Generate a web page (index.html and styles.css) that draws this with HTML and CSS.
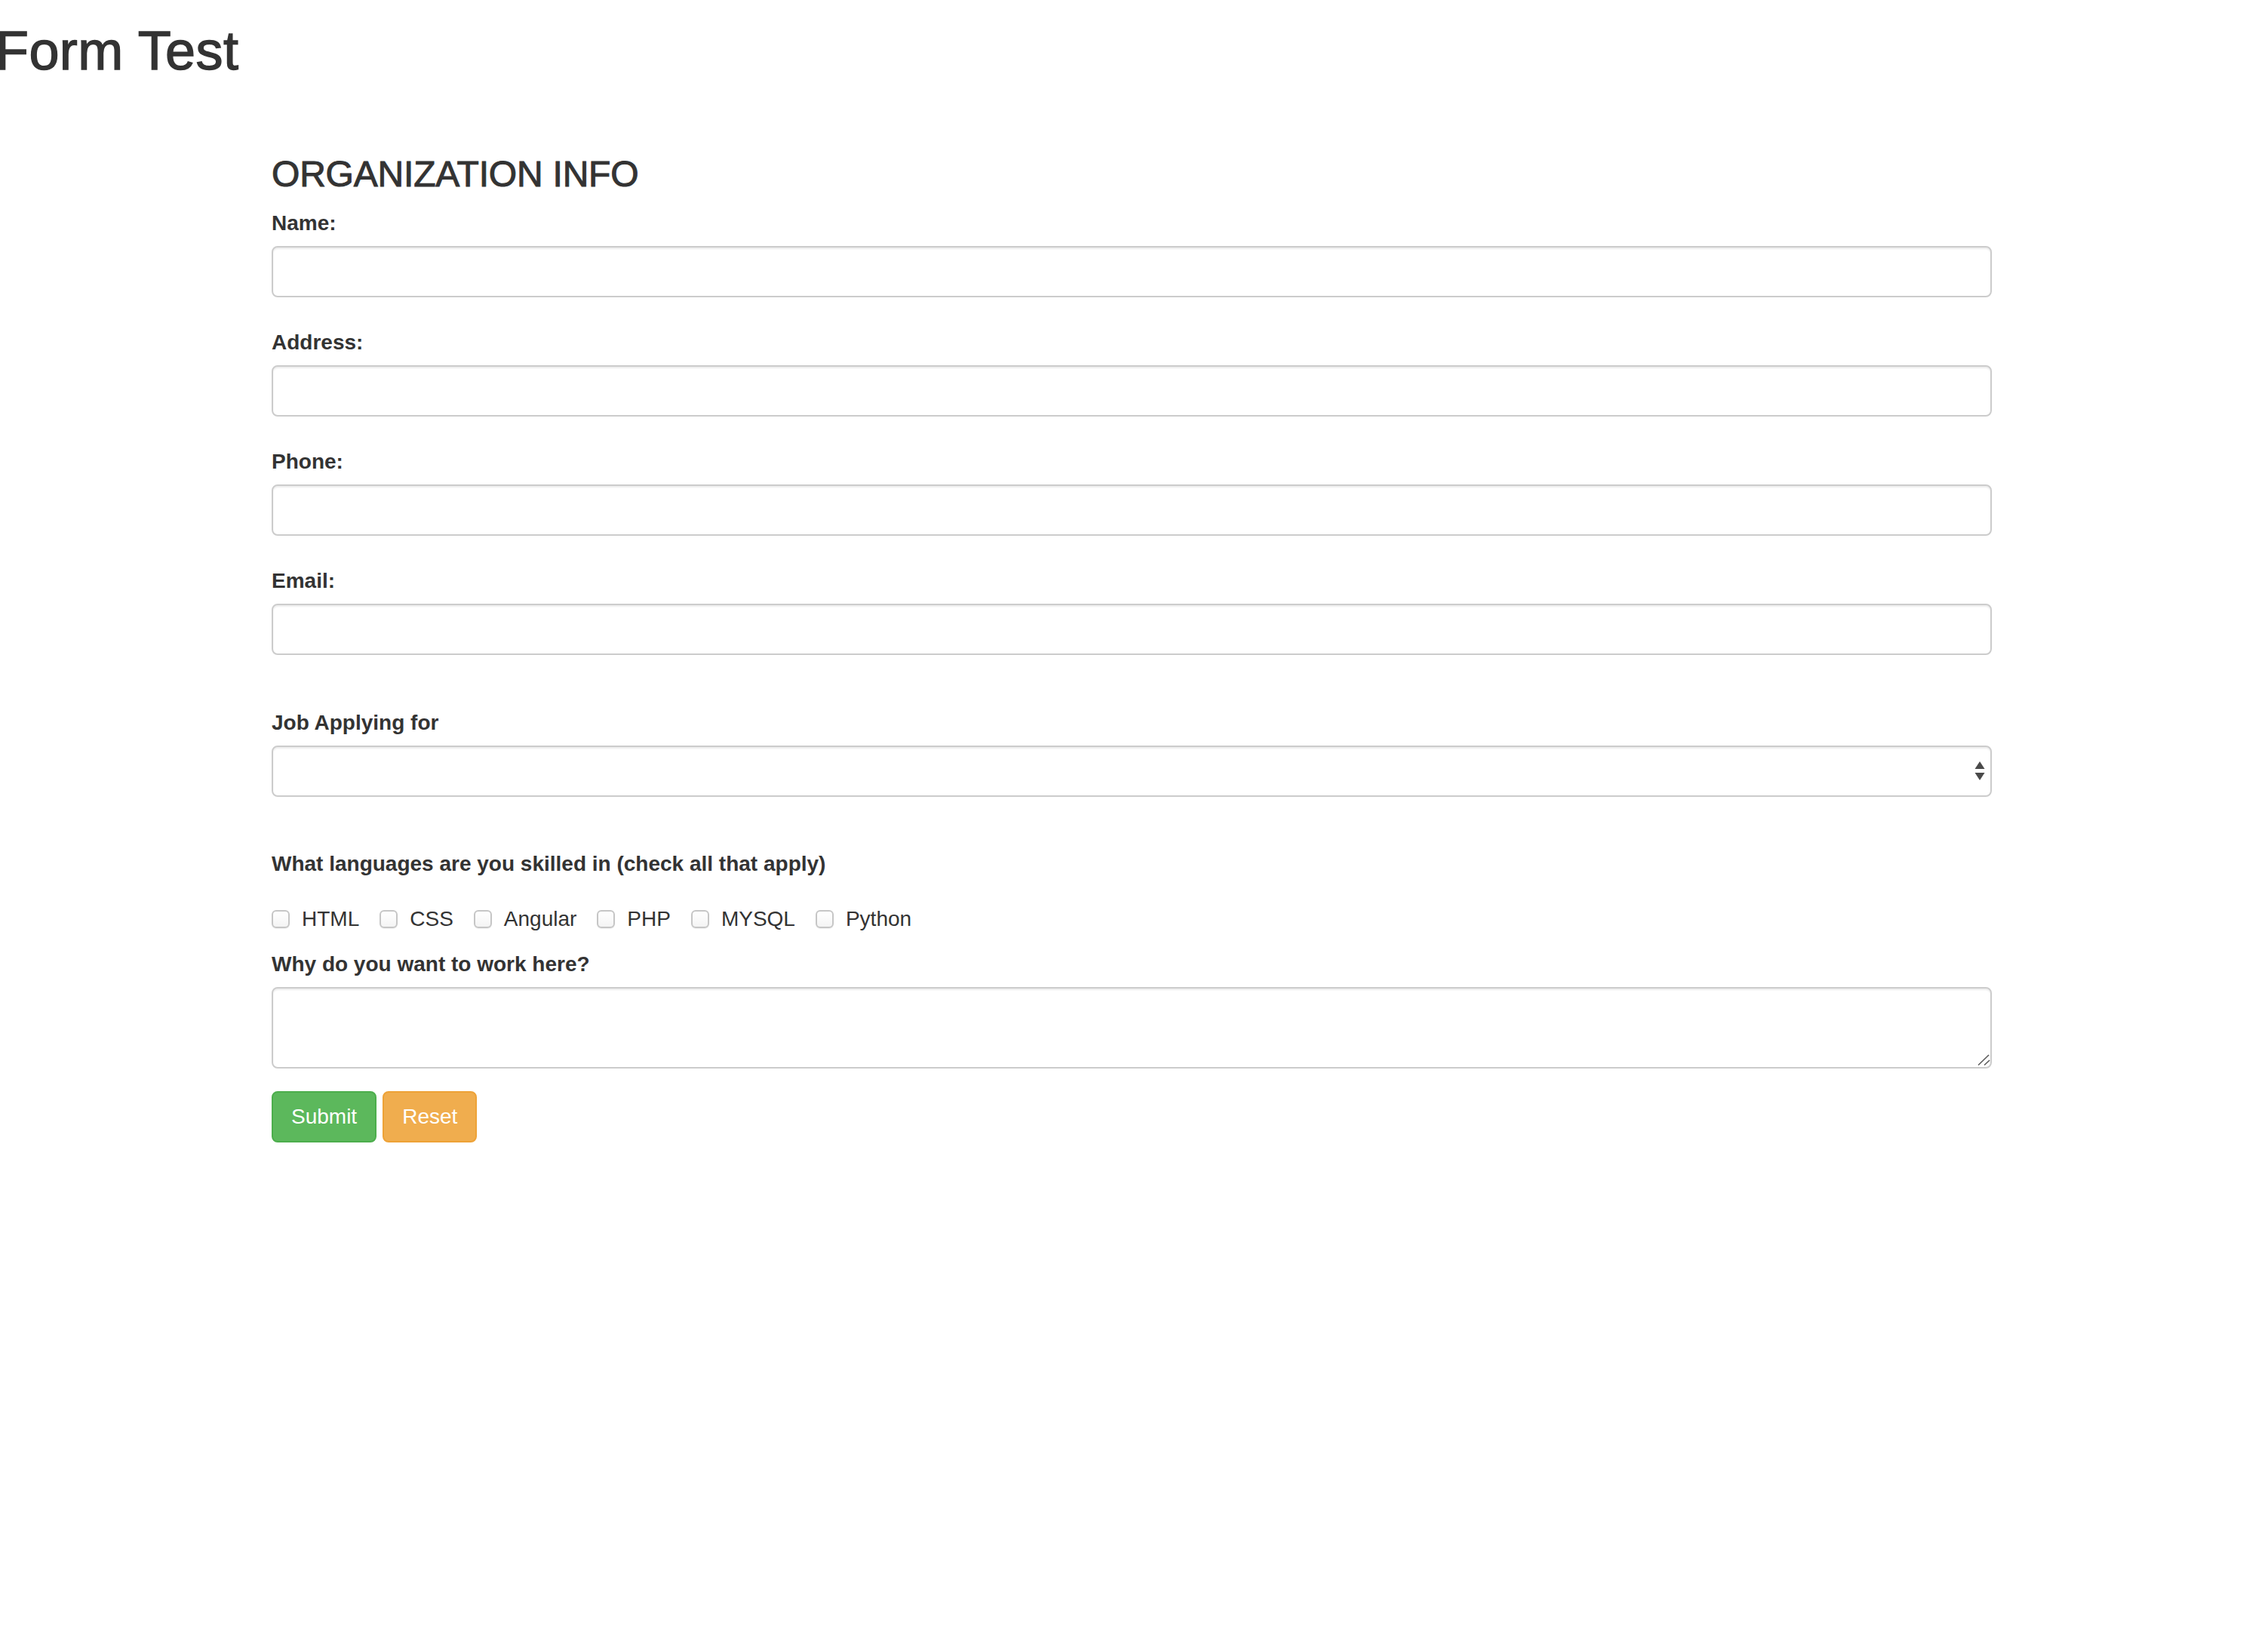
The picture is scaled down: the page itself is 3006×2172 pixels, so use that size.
FILE: index.html
```html
<!DOCTYPE html>
<html lang="en">
<head>
<meta charset="utf-8">
<title>Form Test</title>
<link rel="stylesheet" href="styles.css">
</head>
<body>
<h1 class="page-title">Form Test</h1>
<div class="container">
  <form class="form">
    <h3 class="section-title">ORGANIZATION INFO</h3>
    <div class="form-group">
      <label class="label" for="name">Name:</label>
      <input class="control" id="name" type="text">
    </div>
    <div class="form-group">
      <label class="label" for="address">Address:</label>
      <input class="control" id="address" type="text">
    </div>
    <div class="form-group">
      <label class="label" for="phone">Phone:</label>
      <input class="control" id="phone" type="text">
    </div>
    <div class="form-group">
      <label class="label" for="email">Email:</label>
      <input class="control" id="email" type="text">
    </div>
    <div class="form-group job-group">
      <label class="label" for="job">Job Applying for</label>
      <div class="select-wrap">
        <select class="control select" id="job"></select>
        <svg class="select-arrows" width="14" height="26" viewBox="0 0 14 26"><polygon points="0.5,10 7,0 13.5,10" fill="#4a4a4a"/><polygon points="0.5,15 13.5,15 7,25" fill="#4a4a4a"/></svg>
      </div>
    </div>
    <div class="lang-group">
      <div class="label lang-label">What languages are you skilled in (check all that apply)</div>
      <div class="checks">
        <label class="check"><input type="checkbox" class="box">HTML</label>
        <label class="check"><input type="checkbox" class="box">CSS</label>
        <label class="check"><input type="checkbox" class="box">Angular</label>
        <label class="check"><input type="checkbox" class="box">PHP</label>
        <label class="check"><input type="checkbox" class="box">MYSQL</label>
        <label class="check"><input type="checkbox" class="box">Python</label>
      </div>
    </div>
    <div class="why-group">
      <label class="label" for="why">Why do you want to work here?</label>
      <div class="textarea-wrap">
        <textarea class="control textarea" id="why" rows="2"></textarea>
        <svg class="resize-grip" width="18" height="17" viewBox="0 0 18 17"><line x1="2" y1="15.5" x2="16" y2="2" stroke="#5a5a5a" stroke-width="1.6"/><line x1="10" y1="15.5" x2="17" y2="9" stroke="#5a5a5a" stroke-width="1.6"/></svg>
      </div>
    </div>
    <div class="actions">
      <button type="submit" class="btn btn-success">Submit</button>
      <button type="reset" class="btn btn-warning">Reset</button>
    </div>
  </form>
</div>
</body>
</html>
```
FILE: styles.css
```css
* {
  box-sizing: border-box;
}

html, body {
  margin: 0;
  padding: 0;
  background: #fff;
}

body {
  font-family: "Liberation Sans", Arial, Helvetica, sans-serif;
  font-size: 28px;
  line-height: 40px;
  color: #333;
}

.page-title {
  margin: 28px 0 0 -6px;
  font-size: 72px;
  line-height: 79px;
  font-weight: 400;
  letter-spacing: 0.4px;
  color: #333;
  -webkit-text-stroke: 1.4px #333;
}

.container {
  width: 2280px;
  margin: 0 0 0 360px;
}

.form {
  margin: 0;
}

.section-title {
  margin: 97px 0 19px;
  font-size: 48px;
  line-height: 53px;
  font-weight: 400;
  letter-spacing: -0.2px;
  color: #333;
  -webkit-text-stroke: 1px #333;
}

.form-group {
  margin-bottom: 40px;
}

.label {
  display: block;
  margin-bottom: 10px;
  font-weight: 700;
  line-height: 40px;
}

.control {
  display: block;
  width: 100%;
  height: 68px;
  padding: 12px 24px;
  font-family: inherit;
  font-size: 28px;
  line-height: 40px;
  color: #555;
  background: #fff;
  border: 2px solid #ccc;
  border-radius: 8px;
  box-shadow: inset 0 2px 2px rgba(0, 0, 0, 0.075);
  outline: none;
  margin: 0;
}

.job-group {
  margin-top: 70px;
  margin-bottom: 69px;
}

.select-wrap {
  position: relative;
}

.select {
  -webkit-appearance: none;
  appearance: none;
}

.select-arrows {
  position: absolute;
  right: 9px;
  top: 21px;
}

.lang-group {
  margin-bottom: 20px;
}

.lang-label {
  margin-bottom: 0;
}

.checks {
  display: flex;
  gap: 27px;
  padding-top: 33px;
  font-weight: 400;
}

.check {
  display: inline-flex;
  align-items: center;
  line-height: 40px;
}

.box {
  -webkit-appearance: none;
  appearance: none;
  width: 24px;
  height: 24px;
  margin: 0 16px 0 0;
  border: 2px solid #c6c6c6;
  border-radius: 6px;
  background: linear-gradient(#fff, #f4f4f4);
  box-shadow: 0 1px 1px rgba(0, 0, 0, 0.06);
}

.why-group {
  margin-bottom: 30px;
}

.textarea-wrap {
  position: relative;
}

.textarea {
  height: 108px;
  resize: none;
}

.resize-grip {
  position: absolute;
  right: 2px;
  bottom: 3px;
}

.actions {
  display: flex;
  gap: 8px;
}

.btn {
  display: inline-block;
  padding: 12px 24px;
  font-family: inherit;
  font-size: 28px;
  line-height: 40px;
  font-weight: 400;
  color: #fff;
  border: 2px solid transparent;
  border-radius: 8px;
  cursor: pointer;
  margin: 0;
}

.btn-success {
  background: #5cb85c;
  border-color: #4cae4c;
}

.btn-warning {
  background: #f0ad4e;
  border-color: #eea236;
}
```
